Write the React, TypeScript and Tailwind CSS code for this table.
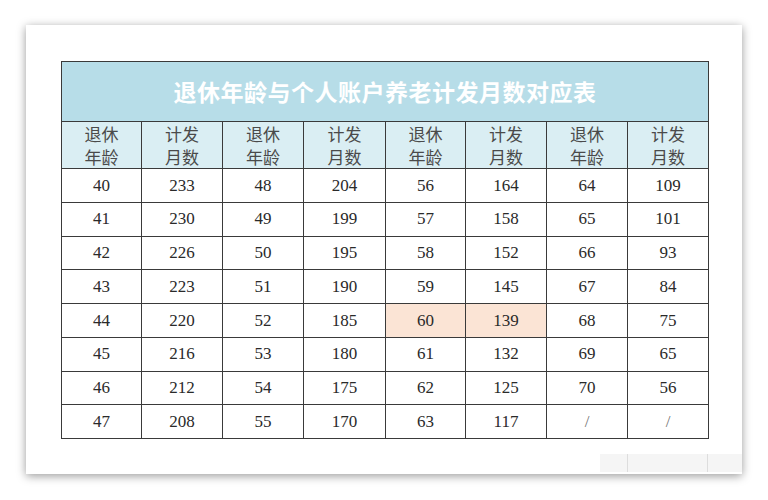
const cols: [string, string][][] = [
  [["40", "233"], ["41", "230"], ["42", "226"], ["43", "223"], ["44", "220"], ["45", "216"], ["46", "212"], ["47", "208"]],
  [["48", "204"], ["49", "199"], ["50", "195"], ["51", "190"], ["52", "185"], ["53", "180"], ["54", "175"], ["55", "170"]],
  [["56", "164"], ["57", "158"], ["58", "152"], ["59", "145"], ["60", "139"], ["61", "132"], ["62", "125"], ["63", "117"]],
  [["64", "109"], ["65", "101"], ["66", "93"], ["67", "84"], ["68", "75"], ["69", "65"], ["70", "56"], ["/", "/"]],
];

const widths = [80, 81, 81, 82, 80, 81, 81, 81];

export default function App() {
  return (
    <div className="w-[768px] h-[500px] bg-white pt-[25px] pl-[26px] overflow-hidden">
      <div className="relative w-[716px] h-[449px] bg-white shadow-[0_2px_9px_rgba(0,0,0,0.4)] pt-[36px] pl-[35px]">
        <table className="border-collapse table-fixed" style={{ width: 648 }}>
          <colgroup>
            {widths.map((w, i) => (
              <col key={i} style={{ width: w }} />
            ))}
          </colgroup>
          <thead>
            <tr className="h-[60px]">
              <th
                colSpan={8}
                className="border border-[#3a3a3a] bg-[#b7dde8] text-white text-[23px] font-bold text-center font-['Noto_Sans_CJK_SC',sans-serif] tracking-[0.5px]"
              >
                退休年龄与个人账户养老计发月数对应表
              </th>
            </tr>
            <tr className="h-[47px]">
              {widths.map((_, i) => (
                <th
                  key={i}
                  className="border border-[#3a3a3a] bg-[#daeef3] font-normal text-[17px] leading-[23px] text-[#4a4a4a] text-center font-['Noto_Sans_CJK_SC',sans-serif]"
                >
                  {i % 2 === 0 ? (
                    <>
                      退休
                      <br />
                      年龄
                    </>
                  ) : (
                    <>
                      计发
                      <br />
                      月数
                    </>
                  )}
                </th>
              ))}
            </tr>
          </thead>
          <tbody>
            {Array.from({ length: 8 }).map((_, r) => (
              <tr key={r} className="h-[33.75px]">
                {cols.map((c, ci) => {
                  const hl = ci === 2 && r === 4;
                  return [0, 1].map((k) => (
                    <td
                      key={`${ci}-${k}`}
                      className={`border border-[#3a3a3a] text-center text-[17px] text-[#2a2a2a] font-['Liberation_Serif',serif] ${
                        hl ? "bg-[#fbe4d5]" : ""
                      } ${c[r][k] === "/" ? "text-[#777] text-[15px]" : ""}`}
                    >
                      {c[r][k]}
                    </td>
                  ));
                })}
              </tr>
            ))}
          </tbody>
        </table>
        {/* faint sheet grid lines near the bottom right */}
        <div className="absolute left-[574px] bottom-[2px] w-[142px] h-[18px] bg-[#f5f5f5]">
          <div className="absolute left-[27px] top-0 h-full border-l border-[#dddddd]" />
          <div className="absolute left-[107px] top-0 h-full border-l border-[#dddddd]" />
        </div>
      </div>
    </div>
  );
}
